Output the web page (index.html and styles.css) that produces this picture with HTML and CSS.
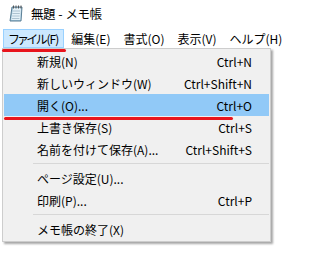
FILE: index.html
```html
<!DOCTYPE html>
<html lang="ja">
<head>
    <meta charset="UTF-8">
    <title>無題 - メモ帳</title>
    <link rel="stylesheet" href="styles.css">
</head>
<body>
    <div class="window">
        <div class="titlebar">
            <svg class="app-icon" width="15" height="17" viewBox="0 0 15 17">
                <path d="M3 2 L13 2 L12 16 L1 16 Z" fill="#9ec3d8" stroke="#5b7f96" stroke-width="1"/>
                <path d="M4 3 L12 3 L11.2 15 L2.2 15 Z" fill="#e4f1f8"/>
                <path d="M3.6 6 H11 M3.4 8.5 H10.8 M3.2 11 H10.6 M3 13.5 H10.4" stroke="#9fb8c6" stroke-width="0.8"/>
                <path d="M4.5 0.5 V3.5 M7 0.5 V3.5 M9.5 0.5 V3.5 M12 0.5 V3.5" stroke="#555" stroke-width="1"/>
            </svg>
            <span class="title">無題 - メモ帳</span>
        </div>

        <div class="menubar">
            <span class="menu-top open">ファイル(F)</span>
            <span class="menu-top">編集(E)</span>
            <span class="menu-top">書式(O)</span>
            <span class="menu-top">表示(V)</span>
            <span class="menu-top">ヘルプ(H)</span>
        </div>

        <div class="dropdown">
            <div class="item"><span>新規(N)</span><span>Ctrl+N</span></div>
            <div class="item"><span>新しいウィンドウ(W)</span><span>Ctrl+Shift+N</span></div>
            <div class="item hover"><span>開く(O)...</span><span>Ctrl+O</span></div>
            <div class="item"><span>上書き保存(S)</span><span>Ctrl+S</span></div>
            <div class="item"><span>名前を付けて保存(A)...</span><span>Ctrl+Shift+S</span></div>
            <div class="sep"></div>
            <div class="item"><span>ページ設定(U)...</span><span></span></div>
            <div class="item"><span>印刷(P)...</span><span>Ctrl+P</span></div>
            <div class="sep"></div>
            <div class="item"><span>メモ帳の終了(X)</span><span></span></div>
        </div>

        <!-- red annotation strokes -->
        <div class="mark mark-menu"></div>
        <div class="mark mark-open"></div>
    </div>
</body>
</html>
```

FILE: styles.css
```css
body { margin: 0; background: #fff; font-family: "Noto Sans CJK JP", "Noto Sans", sans-serif; font-size: 12px; color: #000; }
.window { position: relative; width: 314px; height: 272px; overflow: hidden; }

.titlebar { display: flex; align-items: center; height: 29px; padding-left: 9px; box-sizing: border-box; }
.app-icon { display: block; margin-top: -3px; }
.title { margin-left: 7px; margin-top: -2px; line-height: 16px; font-size: 12.5px; letter-spacing: -0.5px; word-spacing: 1px; }

.menubar { display: flex; height: 19px; padding-left: 3px; }
.menu-top { padding: 0 5px; line-height: 17px; height: 17px; border: 1px solid transparent; white-space: nowrap; margin-right: 1px; }
.menu-top.open { background: #cce8ff; border-color: #99d1ff; font-feature-settings: "palt"; letter-spacing: -1px; }

.dropdown { width: 265px; margin-left: 2px; padding: 1px; background: #f0f0f0; border: 1px solid #cdcdcd; box-shadow: 2px 2px 2px rgba(0, 0, 0, 0.35); }
.item { display: flex; justify-content: space-between; align-items: center; height: 22px; padding: 0 17px 0 33px; white-space: nowrap; }
.item.hover { background: #91c9f7; }
.sep { height: 7px; display: flex; align-items: center; padding-left: 29px; }
.sep::after { content: ""; display: block; flex: 1; height: 1px; background: #d7d7d7; }

.mark { position: absolute; height: 3px; background: #e8141c; border-radius: 2px; }
.mark-menu { left: 2px; top: 49px; width: 64px; }
.mark-open { left: 4px; top: 117px; width: 229px; }
```
